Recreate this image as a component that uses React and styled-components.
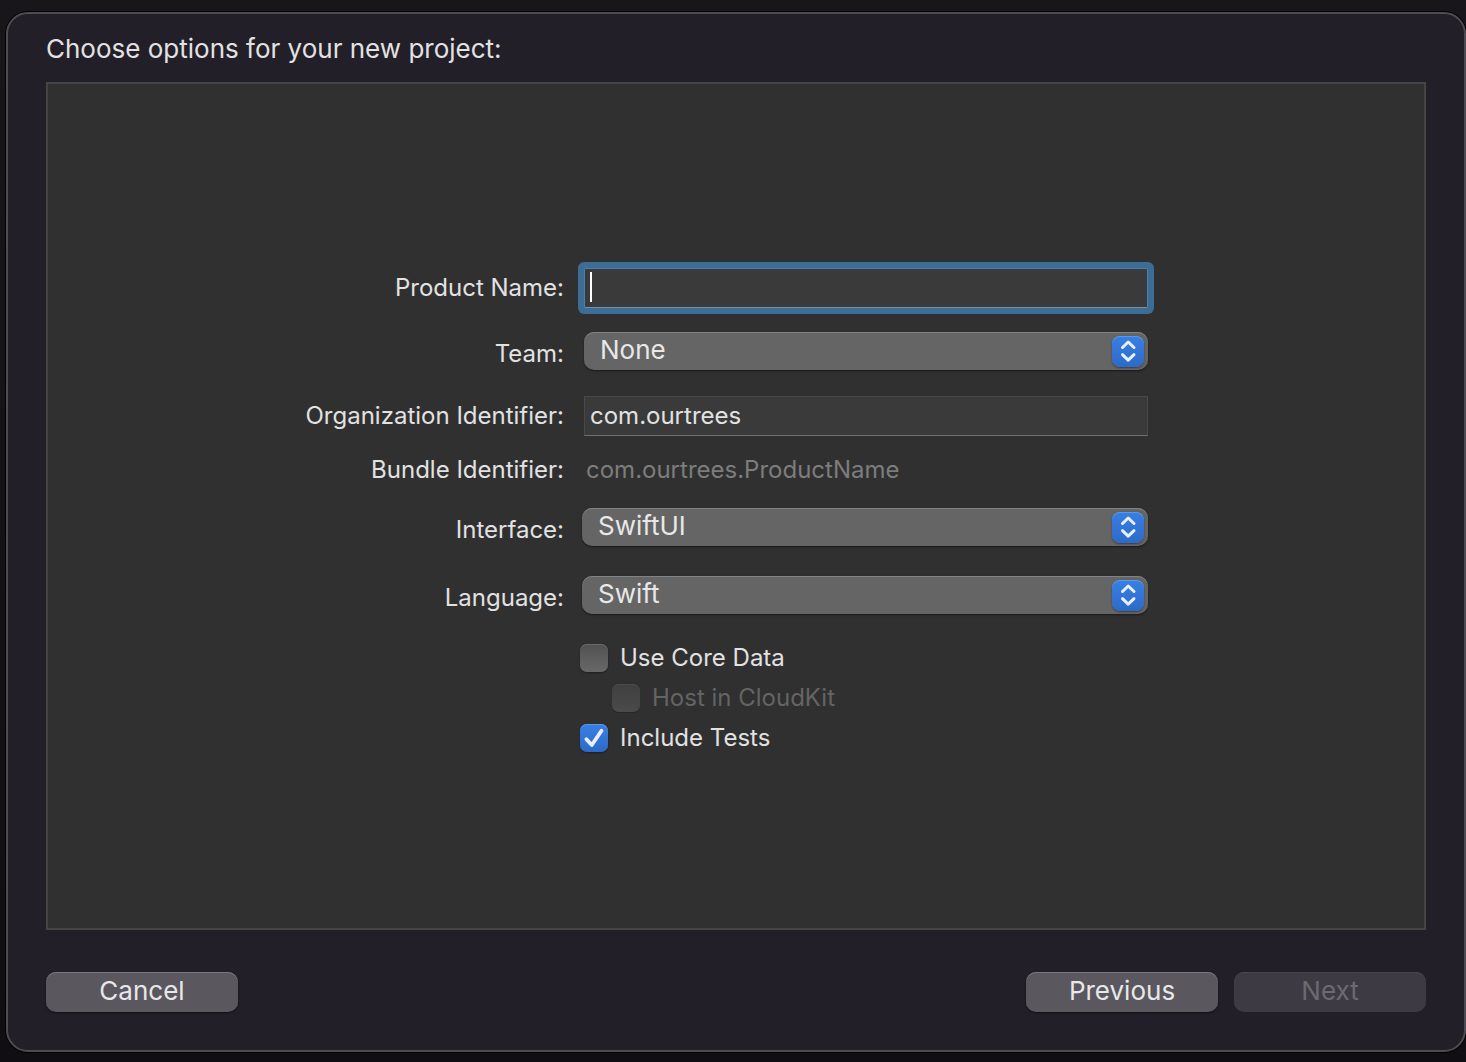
import React, { useState } from 'react';
import styled, { createGlobalStyle, css } from 'styled-components';

const GlobalStyle = createGlobalStyle`
  * {
    box-sizing: border-box;
  }
  body {
    margin: 0;
    background: #151217;
    color: #e2e2e2;
    font-family: Inter, 'Liberation Sans', sans-serif;
    font-size: 24px;
  }
  button, input, select {
    font: inherit;
    color: inherit;
  }
`;

const Backdrop = styled.div`
  display: flex;
  min-height: 100vh;
  padding: 12px 0 10px 6px;
  background: linear-gradient(#19161b, #100e12);
`;

const Dialog = styled.form`
  flex: 1;
  display: flex;
  flex-direction: column;
  padding: 20px 38px 38px;
  background: #221f29;
  border: 2px solid #4e4c52;
  border-radius: 22px;
  box-shadow: 0 0 0 1px #000;
`;

const Title = styled.h1`
  margin: 0 0 18px;
  font-size: 26px;
  font-weight: 400;
  line-height: 30px;
`;

const Panel = styled.div`
  flex: 1;
  display: flex;
  flex-direction: column;
  justify-content: center;
  gap: 18px;
  padding-top: 8px;
  background: #303030;
  border: 2px solid #454545;
`;

const Group = styled.div`
  display: flex;
  flex-direction: column;
  gap: ${(props) => props.$gap}px;
`;

const Row = styled.div`
  display: grid;
  grid-template-columns: 129fr 141fr 64fr;
  column-gap: 20px;
  min-height: ${(props) => props.$height || 40}px;
`;

const Label = styled.label`
  text-align: right;
  white-space: nowrap;
  line-height: ${(props) => (props.$short ? 32 : 40)}px;
  ${(props) =>
    props.$popup &&
    css`
      line-height: 36px;
      padding-top: 4px;
    `}
`;

const FieldWrap = styled.div`
  position: relative;
`;

const TextField = styled.input`
  display: block;
  width: 100%;
  height: 40px;
  padding: 0 5px 2px;
  background: #3a3a3a;
  border: 1px solid #484848;
  border-bottom-color: #707070;
  border-radius: 0;
  outline: none;
  ${(props) =>
    props.$focused &&
    css`
      border-color: #4a7fae;
      border-bottom-color: #7393ad;
      border-radius: 2px;
      box-shadow: 0 0 0 6px #3d6d95;
      caret-color: transparent;
    `}
`;

// Text cursor of the focused field
const Caret = styled.span`
  position: absolute;
  left: 6px;
  top: 4px;
  width: 2px;
  height: 30px;
  background: #fff;
`;

const BundleId = styled.output`
  padding-left: 2px;
  line-height: 32px;
  color: #7d7d7d;
`;

const PopupWrap = styled.div`
  position: relative;
  height: 38px;
  margin-left: ${(props) => (props.$wide ? -2 : 0)}px;
`;

const PopupSelect = styled.select`
  appearance: none;
  display: block;
  width: 100%;
  height: 38px;
  padding: 0 44px 4px 16px;
  font-size: 26px;
  color: #e8e8e8;
  background: #656565;
  border: 0;
  border-radius: 10px;
  outline: none;
  box-shadow: inset 0 1px 0 #828282, 0 1px 2px rgba(0, 0, 0, 0.5);
`;

const PopupArrows = styled.span`
  position: absolute;
  right: 4px;
  top: 4px;
  width: 32px;
  height: 31px;
  border-radius: 8px;
  background: linear-gradient(#3880e4, #2c6ac8);
  box-shadow: inset 0 1px 0 #5b98ea, 0 1px 2px rgba(0, 0, 0, 0.4);
  pointer-events: none;

  svg {
    display: block;
  }
`;

const CheckList = styled.div`
  grid-column: 2;
  display: flex;
  flex-direction: column;
  gap: 12px;
  margin-left: -4px;
`;

const CheckLabel = styled.label`
  display: flex;
  align-items: center;
  gap: 12px;
  line-height: 28px;
  padding-left: ${(props) => (props.$nested ? 32 : 0)}px;
  color: ${(props) => (props.$disabled ? '#646464' : 'inherit')};
`;

const CheckBox = styled.span`
  position: relative;
  width: 28px;
  height: 28px;

  input {
    appearance: none;
    display: block;
    width: 28px;
    height: 28px;
    margin: 0;
    border-radius: 7px;
    background: linear-gradient(#515151, #686868);
    box-shadow: inset 0 1px 0 #6c6c6c, 0 1px 2px rgba(0, 0, 0, 0.4);
  }
  input:disabled {
    background: linear-gradient(#404040, #4a4a4a);
    box-shadow: inset 0 1px 0 #4a4a4a, 0 1px 1px rgba(0, 0, 0, 0.2);
  }
  input:checked {
    background: linear-gradient(#3880e4, #2c6ac8);
    box-shadow: inset 0 1px 0 #5b98ea, 0 1px 2px rgba(0, 0, 0, 0.4);
  }
  svg {
    position: absolute;
    inset: 0;
    pointer-events: none;
  }
`;

const Footer = styled.div`
  display: flex;
  gap: 16px;
  margin-top: 42px;
`;

const Button = styled.button`
  width: 192px;
  height: 40px;
  padding: 0 0 4px;
  font-size: 26px;
  color: #e8e7e9;
  background: #5a575e;
  border: 0;
  border-radius: 10px;
  box-shadow: inset 0 1px 0 #7a777e, 0 1px 2px rgba(0, 0, 0, 0.5);

  &:first-child {
    margin-right: auto;
  }
  &:disabled {
    color: #6c6971;
    background: #3d3a44;
    box-shadow: inset 0 1px 0 #4a4750;
  }
`;

const Popup = ({ id, options, wide }) => (
  <PopupWrap $wide={wide}>
    <PopupSelect id={id}>
      {options.map((option) => (
        <option key={option}>{option}</option>
      ))}
    </PopupSelect>
    <PopupArrows>
      <svg width="32" height="31" viewBox="0 0 32 31" fill="none" stroke="#e8effb" strokeWidth="3" strokeLinecap="round" strokeLinejoin="round">
        <path d="M10.5 11.5 L16.2 6 L22 11.5" />
        <path d="M10.5 18.7 L16.2 24.2 L22 18.7" />
      </svg>
    </PopupArrows>
  </PopupWrap>
);

const Check = ({ label, checked, disabled, nested, onChange }) => (
  <CheckLabel $nested={nested} $disabled={disabled}>
    <CheckBox>
      <input type="checkbox" checked={checked} disabled={disabled} onChange={(e) => onChange(e.target.checked)} />
      {checked && (
        <svg width="28" height="28" viewBox="0 0 28 28" fill="none" stroke="#e8effb" strokeWidth="3.8" strokeLinecap="round" strokeLinejoin="round">
          <path d="M6.4 15.2 L11.8 21 L21.5 6.8" />
        </svg>
      )}
    </CheckBox>
    {label}
  </CheckLabel>
);

const App = () => {
  const [name, setName] = useState('');
  const [organization, setOrganization] = useState('com.ourtrees');
  const [coreData, setCoreData] = useState(false);
  const [cloudKit, setCloudKit] = useState(false);
  const [tests, setTests] = useState(true);

  return (
    <>
      <GlobalStyle />
      <Backdrop>
        <Dialog onSubmit={(e) => e.preventDefault()}>
          <Title>Choose options for your new project:</Title>

          <Panel>
            <Group $gap={24}>
              <Row>
                <Label htmlFor="product">Product Name:</Label>
                <FieldWrap>
                  <TextField id="product" type="text" $focused value={name} onChange={(e) => setName(e.target.value)} />
                  {!name && <Caret />}
                </FieldWrap>
              </Row>
              <Row>
                <Label htmlFor="team" $popup>Team:</Label>
                <Popup id="team" options={['None']} />
              </Row>
              <Row>
                <Label htmlFor="organization">Organization Identifier:</Label>
                <TextField
                  id="organization"
                  type="text"
                  value={organization}
                  onChange={(e) => setOrganization(e.target.value)}
                />
              </Row>
            </Group>

            <Row $height={36}>
              <Label htmlFor="bundle" $short>Bundle Identifier:</Label>
              <BundleId id="bundle">{`${organization}.${name || 'ProductName'}`}</BundleId>
            </Row>

            <Group $gap={28}>
              <Row>
                <Label htmlFor="interface" $popup>Interface:</Label>
                <Popup id="interface" options={['SwiftUI', 'Storyboard']} wide />
              </Row>
              <Row>
                <Label htmlFor="language" $popup>Language:</Label>
                <Popup id="language" options={['Swift', 'Objective-C']} wide />
              </Row>
              <Row>
                <CheckList>
                  <Check label="Use Core Data" checked={coreData} onChange={setCoreData} />
                  <Check label="Host in CloudKit" nested disabled={!coreData} checked={cloudKit} onChange={setCloudKit} />
                  <Check label="Include Tests" checked={tests} onChange={setTests} />
                </CheckList>
              </Row>
            </Group>
          </Panel>

          <Footer>
            <Button type="button">Cancel</Button>
            <Button type="button">Previous</Button>
            <Button type="submit" disabled={!name}>Next</Button>
          </Footer>
        </Dialog>
      </Backdrop>
    </>
  );
};

export default App;
